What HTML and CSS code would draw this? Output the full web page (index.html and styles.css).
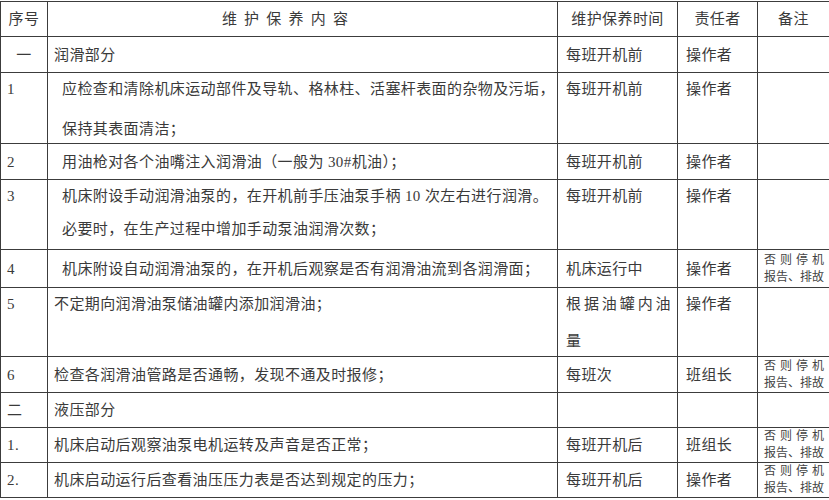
FILE: index.html
```
<!DOCTYPE html>
<html lang="zh-CN">
<head>
<meta charset="utf-8">
<title>维护保养内容</title>
<link rel="stylesheet" href="styles.css">
</head>
<body>
<table class="sheet">
  <colgroup>
    <col class="c-no">
    <col class="c-content">
    <col class="c-time">
    <col class="c-owner">
    <col class="c-note">
  </colgroup>
  <tr class="r-head">
    <th class="center">序号</th>
    <th class="title">维护保养内容</th>
    <th class="center">维护保养时间</th>
    <th class="center">责任者</th>
    <th class="center">备注</th>
  </tr>
  <tr class="r-36">
    <td class="center">一</td>
    <td>润滑部分</td>
    <td>每班开机前</td>
    <td>操作者</td>
    <td></td>
  </tr>
  <tr class="r-71 top">
    <td><div class="box"><div class="ln">1</div></div></td>
    <td class="indent"><div class="box"><div class="ln">应检查和清除机床运动部件及导轨、格林柱、活塞杆表面的杂物及污垢，</div><div class="ln gap-8">保持其表面清洁；</div></div></td>
    <td><div class="box"><div class="ln">每班开机前</div></div></td>
    <td><div class="box"><div class="ln">操作者</div></div></td>
    <td></td>
  </tr>
  <tr class="r-36">
    <td>2</td>
    <td class="indent">用油枪对各个油嘴注入润滑油（一般为 30#机油）；</td>
    <td>每班开机前</td>
    <td>操作者</td>
    <td></td>
  </tr>
  <tr class="r-70 top">
    <td><div class="box"><div class="ln">3</div></div></td>
    <td class="indent"><div class="box"><div class="ln">机床附设手动润滑油泵的，在开机前手压油泵手柄 10 次左右进行润滑。</div><div class="ln gap-1">必要时，在生产过程中增加手动泵油润滑次数；</div></div></td>
    <td><div class="box"><div class="ln">每班开机前</div></div></td>
    <td><div class="box"><div class="ln">操作者</div></div></td>
    <td></td>
  </tr>
  <tr class="r-38">
    <td>4</td>
    <td class="indent">机床附设自动润滑油泵的，在开机后观察是否有润滑油流到各润滑面；</td>
    <td>机床运行中</td>
    <td>操作者</td>
    <td><div class="note"><div class="spread">否则停机</div><div>报告、排故</div></div></td>
  </tr>
  <tr class="r-69 top">
    <td><div class="box"><div class="ln">5</div></div></td>
    <td><div class="box"><div class="ln">不定期向润滑油泵储油罐内添加润滑油；</div></div></td>
    <td><div class="box"><div class="ln spread-line">根据油罐内油</div><div class="ln gap-5">量</div></div></td>
    <td><div class="box"><div class="ln">操作者</div></div></td>
    <td></td>
  </tr>
  <tr class="r-36">
    <td>6</td>
    <td>检查各润滑油管路是否通畅，发现不通及时报修；</td>
    <td>每班次</td>
    <td>班组长</td>
    <td><div class="note"><div class="spread">否则停机</div><div>报告、排故</div></div></td>
  </tr>
  <tr class="r-35">
    <td>二</td>
    <td>液压部分</td>
    <td></td>
    <td></td>
    <td></td>
  </tr>
  <tr class="r-35">
    <td>1.</td>
    <td>机床启动后观察油泵电机运转及声音是否正常；</td>
    <td>每班开机后</td>
    <td>班组长</td>
    <td><div class="note"><div class="spread">否则停机</div><div>报告、排故</div></div></td>
  </tr>
  <tr class="r-35">
    <td>2.</td>
    <td>机床启动运行后查看油压压力表是否达到规定的压力；</td>
    <td>每班开机后</td>
    <td>操作者</td>
    <td><div class="note"><div class="spread">否则停机</div><div>报告、排故</div></div></td>
  </tr>
</table>
</body>
</html>
```
FILE: styles.css
```
html, body {
  margin: 0;
  padding: 0;
  background: #ffffff;
}

body {
  padding-top: 1px;
  font-family: "Liberation Serif", "Noto Sans CJK SC", serif;
  font-size: 15px;
  color: #3a3a3a;
}

.sheet {
  border-collapse: collapse;
  table-layout: fixed;
  width: 829px;
}

.c-no { width: 47px; }
.c-content { width: 510px; }
.c-time { width: 120px; }
.c-owner { width: 80px; }
.c-note { width: 72px; }

.sheet th,
.sheet td {
  border: 1px solid #3c3c3c;
  padding: 0 6px 0 8px;
  font-weight: normal;
  text-align: left;
  vertical-align: middle;
  white-space: nowrap;
  overflow: hidden;
  letter-spacing: 0.4px;
  line-height: 30px;
}

.sheet td:first-child {
  padding-left: 6px;
}

.sheet td:nth-child(2) {
  padding-left: 6px;
}

.sheet td.indent {
  padding-left: 14px;
}

.sheet th.center,
.sheet td.center {
  text-align: center;
  padding-left: 0;
  padding-right: 0;
}

.sheet th.title {
  text-align: center;
  letter-spacing: 7.2px;
  padding-right: 36px;
}

.r-head { height: 35px; }
.r-35 { height: 35px; }
.r-36 { height: 36px; }
.r-38 { height: 38px; }
.r-69 { height: 69px; }
.r-70 { height: 70px; }
.r-71 { height: 71px; }

.top td {
  vertical-align: top;
}

.box {
  height: 40px;
}

.ln {
  height: 32px;
  line-height: 32px;
}

.gap-8 { margin-top: 8px; }
.gap-5 { margin-top: 5px; }
.gap-1 { margin-top: 1px; }

.spread-line {
  text-align: justify;
  text-align-last: justify;
  width: 105px;
}

.sheet td:last-child {
  padding: 0 5px 0 6px;
}

.note {
  width: 60px;
  font-size: 12px;
  line-height: 17px;
  letter-spacing: 0;
  color: #444444;
}

.spread {
  text-align: justify;
  text-align-last: justify;
}
```
